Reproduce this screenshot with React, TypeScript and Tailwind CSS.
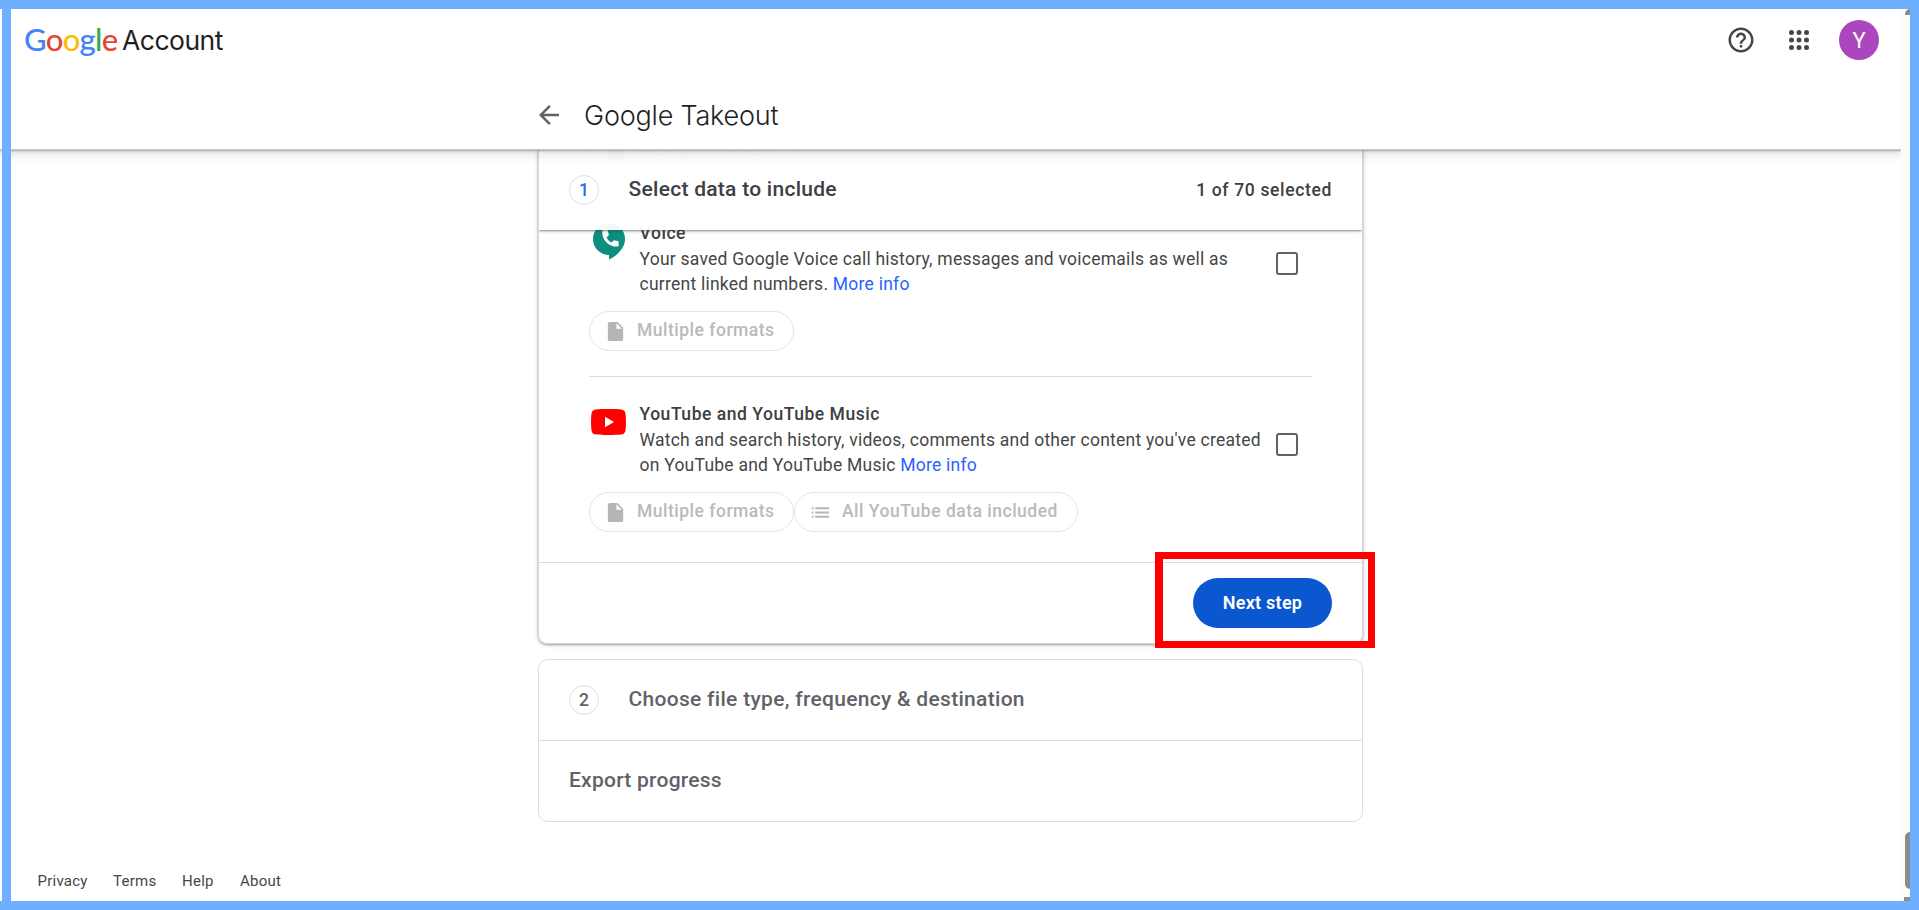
import type { ReactNode } from 'react';

const logo: { ch: string; cls: string }[] = [
  { ch: 'G', cls: 'text-[#4285f4]' },
  { ch: 'o', cls: 'text-[#ea4335]' },
  { ch: 'o', cls: 'text-[#fbbc05]' },
  { ch: 'g', cls: 'text-[#4285f4]' },
  { ch: 'l', cls: 'text-[#34a853]' },
  { ch: 'e', cls: 'text-[#ea4335]' },
];

function FileIcon() {
  return (
    <svg className="h-[23px] w-[23px] shrink-0" viewBox="0 0 24 24" fill="#b4b5b7">
      <path d="M6 2c-1.1 0-2 .9-2 2v16c0 1.1.9 2 2 2h12c1.1 0 2-.9 2-2V8l-6-6H6zm7 7V3.5L18.500 9H13z" />
    </svg>
  );
}

function ListIcon() {
  return (
    <svg className="h-[23px] w-[23px] shrink-0" viewBox="0 0 24 24" fill="#b4b5b7">
      <path d="M3 13h1.800v-2H3v2zm0 4.500h1.800v-2H3v2zm0-9h1.800v-2H3v2zM6.500 13H21v-2H6.500v2zm0 4.500H21v-2H6.500v2zm0-11v2H21v-2H6.500z" />
    </svg>
  );
}

function Chip({ icon, label, width }: { icon: ReactNode; label: string; width: string }) {
  return (
    <div className={`flex h-10 items-center gap-[10px] rounded-full border border-[#e4e5e6] pl-[14px] ${width}`}>
      {icon}
      <span className="-mt-[2px] whitespace-nowrap text-[17.5px] font-[480] leading-5 tracking-[0.5px] text-[#b9babb]">{label}</span>
    </div>
  );
}

function VoiceIcon() {
  return (
    <svg className="h-[37px] w-[32px]" viewBox="0 0 32 37">
      <path d="M16 0a16 16 0 0 0 0 32v4.600C23 33 32 26 32 16A16 16 0 0 0 16 0z" fill="#0b8f7e" />
      <path
        d="M10.600 7.200l3-.4c.6 0 1 .3 1.200.9l1 3.700c.1.500 0 .9-.3 1.200l-2 1.900c1.200 2.300 2.700 3.900 5 5.100l1.900-1.900c.3-.3.7-.4 1.200-.3l3.100.6c.6.1 1 .6 1 1.200v3.200c0 .7-.5 1.200-1.200 1.200C15.500 23.600 8.900 17 9.200 8.400c0-.7.6-1.100 1.400-1.200z"
        fill="#fff"
      />
    </svg>
  );
}

function YouTubeIcon() {
  return (
    <svg className="h-[26px] w-[35px]" viewBox="0 0 35 26">
      <path d="M17.500 0C26 0 29.500.2 31.200.7c1.600.4 2.700 1.500 3.100 3.100.9 4 .9 14.400 0 18.400-.4 1.600-1.500 2.700-3.100 3.100-2.700.9-24.700.9-27.400 0-1.600-.4-2.700-1.500-3.100-3.100-.9-4-.9-14.400 0-18.400C1.100 2.200 2.200 1.100 3.800.7 5.500.2 9 0 17.500 0z" fill="#f00" />
      <path d="M14 7.700v10.600l9-5.300z" fill="#fff" />
    </svg>
  );
}

function Product({ icon, title, lines, children }: { icon: ReactNode; title: string; lines: [string, string]; children: ReactNode }) {
  return (
    <div className="px-[50px]">
      <div className="flex h-[80px]">
        <div className="flex w-[50.500px] shrink-0 pl-[2px]">{icon}</div>
        <div className="w-[636.5px] shrink-0 whitespace-nowrap">
          <div className="text-[17.5px] font-[480] leading-[27px] tracking-[0.53px] text-[#3c4043]">{title}</div>
          <div className="text-[17.5px] leading-[25px] tracking-[0.24px] text-[#444746]">
            <div>{lines[0]}</div>
            <div>
              {lines[1]} <a className="text-[#2962ff]">More info</a>
            </div>
          </div>
        </div>
        <div className="mt-[32px] h-[23px] w-[22px] rounded-[3px] border-2 border-[#5f6368]" />
      </div>
      <div className="mt-[10px] flex pt-px">{children}</div>
    </div>
  );
}

function StepNumber({ n, active }: { n: string; active?: boolean }) {
  return (
    <div
      className={`flex h-[30px] w-[30px] items-center justify-center rounded-full border pt-px text-[17.5px] font-medium ${
        active ? 'border-[#d2e3fc] text-[#1a73e8]' : 'border-[#dadce0] text-[#5f6368]'
      }`}
    >
      {n}
    </div>
  );
}

export default function App() {
  return (
    <div className="relative h-[910px] w-[1919px] overflow-hidden bg-white font-[Roboto,sans-serif]">
      <div className="flex h-full py-[9px] pr-[9px]">
        <div className="flex w-[1901px] flex-col">
          <header className="relative z-20 h-[141px] shrink-0 border-b border-[#c4c7c9] bg-white shadow-[0_1px_2px_rgba(60,64,67,0.4),0_3px_9px_2px_rgba(60,64,67,0.15)]">
            <div className="flex h-[62px] items-center pl-[24px] pr-[22px]">
              <div className="flex flex-1 items-center whitespace-nowrap">
                <span className="-mt-[2px] w-[98px] font-[Lato,sans-serif] text-[31px] font-medium leading-[40px] tracking-[-0.7px]">
                  {logo.map((l, i) => (
                    <span key={i} className={l.cls}>
                      {l.ch}
                    </span>
                  ))}
                </span>
                <span className="font-[Inter,sans-serif] text-[26.5px] font-[380] leading-[40px] tracking-[-0.5px] text-[#1f1f1f]">Account</span>
              </div>
              <svg className="h-[30px] w-[30px]" viewBox="0 0 24 24" fill="#444746">
                <path d="M11 18h2v-2h-2v2zm1-16C6.480 2 2 6.480 2 12s4.480 10 10 10 10-4.480 10-10S17.520 2 12 2zm0 18c-4.410 0-8-3.590-8-8s3.590-8 8-8 8 3.590 8 8-3.590 8-8 8zm0-14c-2.210 0-4 1.790-4 4h2c0-1.100.9-2 2-2s2 .9 2 2c0 2-3 1.750-3 5h2c0-2.250 3-2.500 3-5 0-2.210-1.790-4-4-4z" />
              </svg>
              <svg className="ml-[28px] h-[30px] w-[30px]" viewBox="0 0 24 24" fill="#444746">
                {[6, 12, 18].map((y) => [6, 12, 18].map((x) => <circle key={`${x}-${y}`} cx={x} cy={y} r="2" />))}
              </svg>
              <div className="ml-[25px] flex h-10 w-10 items-center justify-center rounded-full bg-[#ab47bc] pt-px text-[22px] text-white">Y</div>
            </div>
            <div className="flex h-[78px] items-center pl-[534px] pt-[10px]">
              <svg className="h-[30px] w-[30px]" viewBox="0 0 24 24" fill="#5f6368">
                <path d="M20 11H7.830l5.590-5.590L12 4l-8 8 8 8 1.410-1.410L7.830 13H20v-2z" />
              </svg>
              <h1 className="ml-[20px] mt-[2px] whitespace-nowrap font-[Inter,sans-serif] text-[27px] font-[350] leading-9 tracking-[-0.2px] text-[#1f1f1f]">Google Takeout</h1>
            </div>
          </header>

          <main className="flex flex-1 flex-col items-center">
            <section className="relative h-[494px] w-[825px] overflow-hidden rounded-b-[9px] border border-t-0 border-[#d5d7da] shadow-[0_1px_2px_rgba(60,64,67,0.4),0_1px_4px_1px_rgba(60,64,67,0.15)]">
              <div className="absolute inset-x-0 top-0 z-10 flex h-20 items-center bg-white/95 pl-[30px] pr-[30px] shadow-[0_1px_2px_rgba(60,64,67,0.5),0_1px_4px_rgba(60,64,67,0.2)]">
                <StepNumber n="1" active />
                <div className="ml-[29.5px] flex-1 text-[21px] font-[480] tracking-[0.27px] text-[#3c4043]">Select data to include</div>
                <div className="text-[17.5px] font-[480] tracking-[0.65px] text-[#3c4043]">1 of 70 selected</div>
              </div>
              <div className="-mt-[20px] flex pl-[50px]">
                <Chip icon={<FileIcon />} label="Multiple formats" width="w-[205px]" />
              </div>
              <div className="mt-[50px]">
                <Product
                  icon={<div className="ml-[2px] mt-[3px]"><VoiceIcon /></div>}
                  title="Voice"
                  lines={['Your saved Google Voice call history, messages and voicemails as well as', 'current linked numbers.']}
                >
                  <Chip icon={<FileIcon />} label="Multiple formats" width="w-[205px]" />
                </Product>
              </div>
              <div className="mx-[50px] mt-[25px] h-px bg-[#dadce0]" />
              <div className="pt-[24px]">
                <Product
                  icon={<div className="mt-[8px]"><YouTubeIcon /></div>}
                  title="YouTube and YouTube Music"
                  lines={["Watch and search history, videos, comments and other content you've created", 'on YouTube and YouTube Music']}
                >
                  <Chip icon={<FileIcon />} label="Multiple formats" width="w-[205px]" />
                  <Chip icon={<ListIcon />} label="All YouTube data included" width="w-[284px]" />
                </Product>
              </div>
              <div className="mt-[30px] flex h-[81px] items-start justify-end border-t border-[#dadce0] pr-[30px] pt-[15px]">
                <button className="h-[50px] w-[139px] rounded-full bg-[#0b57d0] pb-px text-[18px] font-semibold tracking-[0.25px] text-white">Next step</button>
              </div>
            </section>

            <section className="mt-[15px] h-[163px] w-[825px] rounded-[10px] border border-[#dadce0] text-[21px] font-[480] text-[#5f6368]">
              <div className="flex h-[80px] items-center pl-[30px]">
                <StepNumber n="2" />
                <div className="ml-[29.5px] tracking-[0.3px]">Choose file type, frequency &amp; destination</div>
              </div>
              <div className="flex h-[81px] items-center border-t border-[#dadce0] pl-[30px] tracking-[0.25px]">Export progress</div>
            </section>
          </main>

          <footer className="flex h-[40px] pl-[37.5px] text-[15px] leading-[40px] tracking-[0.25px] text-[#444746]">
            <a className="w-[75.5px]">Privacy</a>
            <a className="w-[69px]">Terms</a>
            <a className="w-[58px]">Help</a>
            <a>About</a>
          </footer>
        </div>
        <div className="relative z-20 w-[9px] overflow-hidden bg-[#fcfcfc]">
          <div className="absolute left-[4px] top-0 h-[6px] w-[10px] rounded-tl-[5px] bg-[#8b8b8b]" />
          <div className="absolute left-[4px] top-[823px] h-[57px] w-[10px] rounded-[5px] bg-[#8b8b8b]" />
          <div className="absolute left-[3px] top-[888px] h-[6px] w-[10px] bg-[#8b8b8b]" />
        </div>
      </div>

      <div className="pointer-events-none absolute inset-0 z-30 border-y-[9px] border-r-[9px] border-[#6eb0ff]" />
      <div className="pointer-events-none absolute inset-y-0 left-[2px] z-30 w-[9px] bg-[#6eb0ff]" />
      <div className="pointer-events-none absolute left-[1155px] top-[552px] z-30 h-[96px] w-[220px] border-[7px] border-l-8 border-[#ff0000]" />
    </div>
  );
}
